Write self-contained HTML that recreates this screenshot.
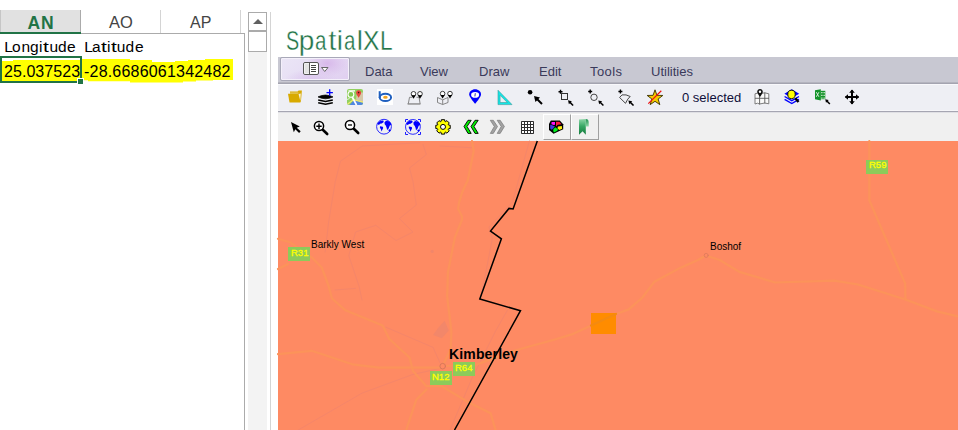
<!DOCTYPE html>
<html><head><meta charset="utf-8">
<style>
*{margin:0;padding:0;box-sizing:border-box}
html,body{width:958px;height:430px;overflow:hidden;background:#fff;position:relative;font-family:"Liberation Sans",sans-serif}
.a{position:absolute;white-space:nowrap;line-height:1}
svg.a{overflow:visible}
</style></head><body>
<!-- Excel column headers -->
<div class="a" style="left:0;top:10px;width:81px;height:22px;background:#e1e1e1;border-right:1px solid #ababab;border-left:1px solid #c6c6c6"></div>
<div class="a" style="left:0;top:32px;width:81px;height:2px;background:#217346"></div>
<div class="a" style="left:160px;top:10px;width:1px;height:23px;background:#d4d4d4"></div>
<div class="a" style="left:240px;top:10px;width:1px;height:23px;background:#d4d4d4"></div>
<div class="a" style="left:81px;top:33px;width:164px;height:1px;background:#ababab"></div>
<div class="a" style="left:244px;top:33px;width:1px;height:397px;background:#ababab"></div>
<div class="a" style="left:27.5px;top:15px;font-size:17.5px;font-weight:bold;letter-spacing:0.8px;color:#217346">AN</div>
<div class="a" style="left:109px;top:14px;font-size:16.5px;color:#444">AO</div>
<div class="a" style="left:190px;top:15px;font-size:16px;color:#444">AP</div>
<!-- rows -->
<span class="a" style="left:4.3px;top:39px;font-size:15.5px;color:#000">L</span><span class="a" style="left:11.9px;top:39px;font-size:15.5px;color:#000">o</span><span class="a" style="left:21.5px;top:39px;font-size:15.5px;color:#000">n</span><span class="a" style="left:30.1px;top:39px;font-size:15.5px;color:#000">g</span><span class="a" style="left:39.0px;top:39px;font-size:15.5px;color:#000">i</span><span class="a" style="left:43.3px;top:39px;font-size:15.5px;color:#000;transform:scaleX(1.35);transform-origin:0 0">t</span><span class="a" style="left:49.5px;top:39px;font-size:15.5px;color:#000">u</span><span class="a" style="left:58.1px;top:39px;font-size:15.5px;color:#000">d</span><span class="a" style="left:66.9px;top:39px;font-size:15.5px;color:#000">e</span>
<span class="a" style="left:84.3px;top:39px;font-size:15.5px;color:#000">L</span><span class="a" style="left:91.9px;top:39px;font-size:15.5px;color:#000">a</span><span class="a" style="left:101.1px;top:39px;font-size:15.5px;color:#000;transform:scaleX(1.35);transform-origin:0 0">t</span><span class="a" style="left:107.0px;top:39px;font-size:15.5px;color:#000">i</span><span class="a" style="left:111.3px;top:39px;font-size:15.5px;color:#000;transform:scaleX(1.35);transform-origin:0 0">t</span><span class="a" style="left:116.8px;top:39px;font-size:15.5px;color:#000">u</span><span class="a" style="left:125.6px;top:39px;font-size:15.5px;color:#000">d</span><span class="a" style="left:134.9px;top:39px;font-size:15.5px;color:#000">e</span>
<div class="a" style="left:2px;top:60px;width:79px;height:21px;background:#ffff00"></div>
<div class="a" style="left:2px;top:58px;width:11px;height:3px;background:#fff"></div>
<svg class="a" style="left:0;top:0" width="958" height="100"><polygon fill="#ffff00" points="82,59 130,59 130,60 152,60 152,62 175,62 175,61 188,61 188,60 205,60 205,59 233,59 233,80 213,80 213,80.5 196,80.5 196,81.5 183,81.5 183,82.6 130,82.6 130,81.2 88,81.2 88,80.2 82,80.2"/></svg>
<div class="a" style="left:0;top:56px;width:82px;height:27px;border:2px solid #217346"></div>
<div class="a" style="left:77px;top:78px;width:7px;height:7px;background:#217346;border:1px solid #fff"></div>
<div class="a" style="left:4px;top:64px;font-size:16px;letter-spacing:0.05px;color:#000">25.037523</div>
<div class="a" style="left:84px;top:64px;font-size:16px;letter-spacing:0.2px;color:#000">-28.6686061342482</div>
<!-- scrollbar -->
<div class="a" style="left:248px;top:12px;width:19px;height:418px;background:#f3f3f3"></div>
<div class="a" style="left:248px;top:12px;width:19px;height:19px;background:#fff;border:1px solid #ababab"></div>
<div class="a" style="left:248px;top:31px;width:19px;height:21px;background:#fff;border:1px solid #ababab"></div>
<svg class="a" style="left:253px;top:18px" width="10" height="6"><path d="M0 6 L5 1 L10 6Z" fill="#606060"/></svg>
<div class="a" style="left:270px;top:12px;width:1px;height:418px;background:#d4d4d4"></div>
<!-- SpatialXL -->
<div class="a" style="left:285.69px;top:27px;font-size:28px;color:#217346;-webkit-text-stroke:0.35px #fff;transform:scaleX(0.706);transform-origin:0 0">S</div>
<div class="a" style="left:298.70px;top:27px;font-size:28px;color:#217346;-webkit-text-stroke:0.35px #fff">p</div>
<div class="a" style="left:314.97px;top:27px;font-size:28px;color:#217346;-webkit-text-stroke:0.35px #fff;transform:scaleX(0.733);transform-origin:0 0">a</div>
<div class="a" style="left:328.60px;top:27px;font-size:28px;color:#217346;-webkit-text-stroke:0.35px #fff">t</div>
<div class="a" style="left:336.80px;top:27px;font-size:28px;color:#217346;-webkit-text-stroke:0.35px #fff">i</div>
<div class="a" style="left:343.67px;top:27px;font-size:28px;color:#217346;-webkit-text-stroke:0.35px #fff;transform:scaleX(0.733);transform-origin:0 0">a</div>
<div class="a" style="left:356.70px;top:27px;font-size:28px;color:#217346;-webkit-text-stroke:0.35px #fff">l</div>
<div class="a" style="left:362.62px;top:27px;font-size:28px;color:#217346;-webkit-text-stroke:0.35px #fff;transform:scaleX(0.882);transform-origin:0 0">X</div>
<div class="a" style="left:379.68px;top:27px;font-size:28px;color:#217346;-webkit-text-stroke:0.35px #fff;transform:scaleX(0.808);transform-origin:0 0">L</div>
<div class="a" style="left:278px;top:57px;width:680px;height:27px;background:#c8c8d2;border-bottom:1px solid #a4a4b0"></div>
<div class="a" style="left:278px;top:82px;width:680px;height:1px;background:#b4b4be"></div>
<div class="a" style="left:280px;top:57px;width:70px;height:24px;background:radial-gradient(ellipse 30% 60% at 68% 25%,#d8b8ea 0%,rgba(216,184,234,0) 100%),radial-gradient(ellipse 40% 50% at 45% 100%,#dcc6ee 0%,rgba(220,198,238,0) 100%),linear-gradient(135deg,#ebe6f6 0%,#e6ddf4 50%,#e0cef0 100%);border:1px solid #a8a8b8;border-radius:2px;box-shadow:inset 0 0 0 1px #f4f0fa"></div>
<div class="a" style="left:365px;top:65px;font-size:13px;color:#3a3a5a">Data</div>
<div class="a" style="left:420px;top:65px;font-size:13px;color:#3a3a5a">View</div>
<div class="a" style="left:479px;top:65px;font-size:13px;color:#3a3a5a">Draw</div>
<div class="a" style="left:539px;top:65px;font-size:13px;color:#3a3a5a">Edit</div>
<div class="a" style="left:590px;top:65px;font-size:13px;letter-spacing:0.4px;color:#3a3a5a">Tools</div>
<div class="a" style="left:651px;top:65px;font-size:13px;color:#3a3a5a">Utilities</div>
<div class="a" style="left:278px;top:84px;width:680px;height:29px;background:#eeeff4;border-top:1px solid #f8f8fb;border-bottom:1px solid #e0e0e4"></div>
<div class="a" style="left:278px;top:110px;width:680px;height:1px;background:#f6f6f9"></div>
<div class="a" style="left:278px;top:111px;width:680px;height:1px;background:#a6a6b2"></div>
<div class="a" style="left:682px;top:91px;font-size:13px;color:#10103a">0 selected</div>
<div class="a" style="left:278px;top:113px;width:680px;height:28px;background:#f0f0f0"></div>
<!-- pressed buttons -->
<div class="a" style="left:543px;top:114px;width:28px;height:26px;border:1px solid;border-color:#fff #a0a0a0 #a0a0a0 #fff"></div>
<div class="a" style="left:571px;top:114px;width:28px;height:26px;border:1px solid;border-color:#fff #a0a0a0 #a0a0a0 #fff"></div>
<!-- icons -->
<svg class="a" style="left:0;top:0" width="958" height="145" viewBox="0 0 958 145">
<!-- menu button icon -->
<rect x="303.5" y="62.5" width="15" height="12" rx="1.5" fill="#fff" stroke="#555" stroke-width="1"/>
<rect x="304.5" y="63.5" width="4.5" height="10" fill="#e4e4e4"/>
<line x1="309.5" y1="62.5" x2="309.5" y2="74.5" stroke="#555" stroke-width="1"/>
<path d="M311 65.5h5M311 67.5h5M311 69.5h5M311 71.5h5" stroke="#444" stroke-width="1"/>
<path d="M321.5 67.5h6.5l-3.25 4z" fill="#fff" stroke="#666" stroke-width="1"/>
<!-- 1 folder -->
<path d="M290 91.6h7.6l1-1h3.3l-1 11.2h-2.5l-0.6-8h-7.8z" fill="#d8aa00"/>
<path d="M290 93h8.5" stroke="#f4e8c0" stroke-width="0.6"/>
<path d="M288 93.8h10.3l2.2 8.8h-11z" fill="#d8aa00"/>
<path d="M298.6 93.9l2.2-0.4-0.5 7.6z" fill="#f6f0dc"/>
<!-- 2 layers -->
<path d="M318 96.9l3.5-1.3 4-0.6 4 0.6 3.5 1.3-3.5 1.3-4 0.6-4-0.6z" fill="#000" stroke="#000" stroke-width="0.7"/>
<path d="M318.2 100l7.3 1.5 7.3-1.5M318.2 102.7l7.3 1.5 7.3-1.5" fill="none" stroke="#000" stroke-width="1.5"/>
<path d="M326.5 92.6h6.4M329.7 89.3v6.4" stroke="#0000ff" stroke-width="1.3"/>
<!-- 3 google maps -->
<clipPath id="gm"><rect x="0" y="0" width="16" height="16" rx="2"/></clipPath>
<g clip-path="url(#gm)" transform="translate(347 89)">
<rect width="16" height="16" fill="#92d060"/>
<path d="M10 3.5h6v9.5l-7-2.5z" fill="#d6c8a8"/>
<path d="M2.5 16l4.5-5 9 2.5v2.5z" fill="#4f86e0"/>
<path d="M0.5 15.2l6-4.6 9.5 2.6" fill="none" stroke="#f2ea70" stroke-width="1.3"/>
<path d="M1.5 1.8h6.5" stroke="#fff" stroke-width="1.2"/>
<circle cx="3.9" cy="5.4" r="2.9" fill="#84c850" stroke="#fff" stroke-width="1.1"/>
<path d="M5.2 8l4.3 8" stroke="#fff" stroke-width="1.7"/>
<path d="M0 10.5l2.5-1" stroke="#fff" stroke-width="0.8"/>
</g>
<path d="M358.6 90.2c-1.4 0-2.5 1.1-2.5 2.5 0 1.6 2.5 5 2.5 5s2.5-3.4 2.5-5c0-1.4-1.1-2.5-2.5-2.5z" fill="#e8453c"/>
<circle cx="358.6" cy="92.6" r="0.8" fill="#401010"/>
<!-- 4 bing -->
<rect x="377" y="89" width="16" height="16" fill="#fff"/>
<path d="M379.7 91.2v6.8" stroke="#1f5fbf" stroke-width="2"/>
<ellipse cx="385.4" cy="97.4" rx="5.7" ry="3.6" fill="none" stroke="#1f5fbf" stroke-width="2"/>
<ellipse cx="385.4" cy="97.3" rx="2.3" ry="1.5" fill="#f3a31f"/>
<!-- 5 pins on land -->
<path d="M407.5 103.8h13M408.3 103.8l1.2-6.5h2.5M416.5 97.3h2.6l1 6.5" fill="none" stroke="#7a7a7a" stroke-width="0.9"/>
<path d="M407.8 104.3h12.5" stroke="#9a9a9a" stroke-width="0.8"/>
<g id="pin"><circle cx="413.5" cy="93.8" r="2.3" fill="#fff" stroke="#111" stroke-width="0.8"/><path d="M411.3 95.2h4.4l-2.2 3.6z" fill="#000"/></g>
<use href="#pin" x="6.5"/>
<!-- 6 pins on box -->
<path d="M437.5 97.5l5.2 2.3 5.3-2.3M437.5 97.5v5l5.2 2l5.3-2v-5M442.7 99.8v4.7" fill="none" stroke="#7a7a7a" stroke-width="0.9"/>
<use href="#pin" x="29.1" y="-0.2"/>
<use href="#pin" x="36.5" y="-0.2"/>
<!-- 7 blue pin -->
<path d="M475.1 89.3c-3.3 0-5.9 2.3-5.9 5.1 0 2.6 5.9 9.3 5.9 9.3s5.9-6.7 5.9-9.3c0-2.8-2.6-5.1-5.9-5.1z" fill="#0000ff"/>
<ellipse cx="475.1" cy="94.9" rx="4" ry="2.8" fill="#fff"/>
<path d="M475.3 93.2l-0.4 3.2" stroke="#2020a0" stroke-width="0.9"/>
<!-- 8 triangle ruler -->
<path d="M498 90.2v14.4h14zM500.1 95.3v7.2h7.2z" fill="#12e6e6" fill-rule="evenodd" stroke="#3a9a9a" stroke-width="0.6"/>
<!-- 9 dot arrow -->
<circle cx="530.1" cy="92.2" r="2.3" fill="#000"/>
<g id="arr"><path d="M534 96l6 1.4-4.6 4.6z" fill="#000"/><path d="M536.5 98.5l5.5 5.5" stroke="#000" stroke-width="1.9"/></g>
<!-- 10 crop arrow -->
<path d="M558.5 91.7h4M560.5 89.7v4" stroke="#000" stroke-width="1.4"/>
<rect x="561.5" y="93.5" width="6" height="6" fill="none" stroke="#333" stroke-width="1"/>
<g transform="translate(568 100.3) scale(0.64)"><path d="M0 0l6 1.4-4.6 4.6z" fill="#000"/><path d="M2.5 2.5l5.5 5.5" stroke="#000" stroke-width="2.4"/></g>
<!-- 11 circle arrow -->
<path d="M588.2 91.5h4M590.2 89.5v4" stroke="#000" stroke-width="1.4"/>
<circle cx="594" cy="97.3" r="3.2" fill="none" stroke="#333" stroke-width="0.9"/>
<g transform="translate(598.3 100.4) scale(0.64)"><path d="M0 0l6 1.4-4.6 4.6z" fill="#000"/><path d="M2.5 2.5l5.5 5.5" stroke="#000" stroke-width="2.4"/></g>
<!-- 12 polygon arrow -->
<path d="M618.4 91.5h4M620.4 89.5v4" stroke="#000" stroke-width="1.4"/>
<path d="M619.6 97.5l2.4-2.6q4-0.8 8.2 1.6l-2.4 2.6-2.3 4.2z" fill="none" stroke="#333" stroke-width="0.9"/>
<g transform="translate(628.4 100.4) scale(0.64)"><path d="M0 0l6 1.4-4.6 4.6z" fill="#000"/><path d="M2.5 2.5l5.5 5.5" stroke="#000" stroke-width="2.4"/></g>
<!-- 13 star crossed -->
<path d="M655.00 89.80 L656.94 95.33 L662.80 95.47 L658.14 99.02 L659.82 104.63 L655.00 101.30 L650.18 104.63 L651.86 99.02 L647.20 95.47 L653.06 95.33Z" fill="#f4cc00" stroke="#3a3000" stroke-width="0.9" stroke-linejoin="miter"/>
<path d="M648.3 103.6l13-12.8" stroke="#ee1111" stroke-width="1.2"/>
<!-- 14 map pin -->
<path d="M755 93.8l2.5-0.6 2 0.6 5.3-1 4 1v10l-4-0.8-5.3 1-2-0.8-2.5 0.8z" fill="#fafafa" stroke="#707070" stroke-width="0.9"/>
<path d="M759.6 93.6v10.8M764.8 92.6v10.8M755 98.3h14" stroke="#5a5a5a" stroke-width="0.9"/>
<path d="M760 89.1c-1.6 0-2.8 1.2-2.8 2.7 0 1.5 2.8 5.2 2.8 5.2s2.8-3.7 2.8-5.2c0-1.5-1.2-2.7-2.8-2.7z" fill="#111"/>
<circle cx="760" cy="91.8" r="1.2" fill="#fff"/>
<!-- 15 yellow layers -->
<path d="M784.4 93.7l7.4-4.4 7.4 4.4-7.4 4.4z" fill="#0000ff"/>
<path d="M784.6 96.5l7.2 4.1 7.2-4.1M784.6 99.3l7.2 4.2 7.2-4.2" fill="none" stroke="#0000ff" stroke-width="1.4"/>
<ellipse cx="791.5" cy="94.4" rx="3.7" ry="4.2" fill="#ffff00" stroke="#000" stroke-width="0.9"/>
<path d="M795.3 98.3l3.2 3.8" stroke="#000" stroke-width="2.4"/>
<!-- 16 excel -->
<path d="M815 90.3l5.8-1.1v11.2l-5.8-1.2z" fill="#14932a"/>
<rect x="820.5" y="90.8" width="4.8" height="8.4" fill="#14932a"/>
<path d="M816.3 92.2l2.6 4.6M818.9 92.2l-2.6 4.6" stroke="#e8f4e8" stroke-width="0.9"/>
<path d="M821.2 92h1.3v1.2h-1.3zM823.5 92h1.3v1.2h-1.3zM821.2 94.8h1.3v1.2h-1.3zM823.5 94.8h1.3v1.2h-1.3zM821.2 97.5h1.3v1.2h-1.3zM823.5 97.5h1.3v1.2h-1.3z" fill="#d8eed8"/>
<g transform="translate(825.2 99.3) scale(0.58)"><path d="M0 0l6 1.4-4.6 4.6z" fill="#000"/><path d="M2.5 2.5l5.5 5.5" stroke="#000" stroke-width="2.6"/></g>
<!-- 17 move -->
<g transform="translate(0 0.3)"><path d="M845.5 96.7h13M852 90v13.5" stroke="#000" stroke-width="2"/>
<path d="M852 89.3l-2.8 3.2h5.6zM852 104.2l-2.8-3.2h5.6zM844.8 96.7l3.2-2.8v5.6zM859.2 96.7l-3.2-2.8v5.6z" fill="#000"/></g>
<!-- toolbar2 -->
<path d="M291 122l8.8 4.4-3.1 1.3 4 3.6-1.6 1.6-3.8-3.7-1.5 3.1z" fill="#000"/>
<circle cx="319" cy="126" r="4.6" fill="#fff" stroke="#000" stroke-width="1.5"/>
<path d="M316.3 126.2h5.4M319 123.5v5.4" stroke="#000" stroke-width="1.4"/>
<path d="M322.8 129.8l4.4 4.2" stroke="#000" stroke-width="2.6" stroke-linecap="round"/>
<circle cx="350" cy="125" r="4.6" fill="#fff" stroke="#000" stroke-width="1.5"/>
<path d="M348 125h4" stroke="#000" stroke-width="1.3"/>
<path d="M353.8 128.8l4.4 4.2" stroke="#000" stroke-width="2.6" stroke-linecap="round"/>
<g id="globe">
<circle cx="384" cy="126.7" r="7.4" fill="none" stroke="#2b2bff" stroke-width="1"/>
<path d="M377.3 124c0.6-1.8 2.5-3.3 4.8-3.6l1.6 0.3-0.2 1.6-1.8 1.2-1.7 0.2-1 1.2z" fill="#0000ff"/>
<path d="M380 126.2l2.8 0.5 0.4 1.4-1.2 2.5-0.5 1-0.6-2.3-1-1.6z" fill="#0000ff"/>
<path d="M384.5 122.2l1.6-1.5 3.5 0.9 1.6 2 0.3 2-1.1-0.8-0.8 1.3-0.9 2.5-1.6 1.5-0.4-2.2-0.8-2.1-1.2-1.5z" fill="#0000ff"/>
<circle cx="389.6" cy="130.4" r="1.1" fill="#0000ff"/>
</g>
<use href="#globe" x="28.9" y="0.2"/>
<path d="M405.5 119.5h2.5M405.5 119.5v2.5M420.5 119.5h-2.5M420.5 119.5v2.5M405.5 134.5h2.5M405.5 134.5v-2.5M420.5 134.5h-2.5M420.5 134.5v-2.5" stroke="#2020ff" stroke-width="1"/>
<path d="M441.18 121.29 L441.34 119.69 L444.66 119.69 L444.82 121.29 L445.68 121.64 L446.92 120.62 L449.28 122.98 L448.26 124.22 L448.61 125.08 L450.21 125.24 L450.21 128.56 L448.61 128.72 L448.26 129.58 L449.28 130.82 L446.92 133.18 L445.68 132.16 L444.82 132.51 L444.66 134.11 L441.34 134.11 L441.18 132.51 L440.32 132.16 L439.08 133.18 L436.72 130.82 L437.74 129.58 L437.39 128.72 L435.79 128.56 L435.79 125.24 L437.39 125.08 L437.74 124.22 L436.72 122.98 L439.08 120.62 L440.32 121.64Z" fill="#ffff00" stroke="#000" stroke-width="1" stroke-linejoin="round"/>
<circle cx="443" cy="126.9" r="2.5" fill="#fff" stroke="#000" stroke-width="1"/>
<path d="M468 120.3h3.2l-4.2 6.2 4.2 6.9h-3.2l-4-6.9zM475 120.3h3.2l-4.2 6.2 4.2 6.9h-3.2l-4-6.9z" fill="#00f000" stroke="#000" stroke-width="0.9" stroke-linejoin="round"/>
<path d="M490.3 120.3h3l4.2 6.2-4.2 6.9h-3l4-6.9zM497.2 120.3h3l4.2 6.2-4.2 6.9h-3l4-6.9z" fill="#a2a2a2" stroke="#787878" stroke-width="0.7" stroke-linejoin="round"/>
<rect x="521" y="121" width="13" height="13" rx="0.8" fill="#2e2e2e"/>
<rect x="522" y="122" width="2" height="2" fill="#fff"/><rect x="522" y="125" width="2" height="2" fill="#fff"/><rect x="522" y="128" width="2" height="2" fill="#fff"/><rect x="522" y="131" width="2" height="2" fill="#fff"/><rect x="525" y="122" width="2" height="2" fill="#fff"/><rect x="525" y="125" width="2" height="2" fill="#fff"/><rect x="525" y="128" width="2" height="2" fill="#fff"/><rect x="525" y="131" width="2" height="2" fill="#fff"/><rect x="528" y="122" width="2" height="2" fill="#fff"/><rect x="528" y="125" width="2" height="2" fill="#fff"/><rect x="528" y="128" width="2" height="2" fill="#fff"/><rect x="528" y="131" width="2" height="2" fill="#fff"/><rect x="531" y="122" width="2" height="2" fill="#fff"/><rect x="531" y="125" width="2" height="2" fill="#fff"/><rect x="531" y="128" width="2" height="2" fill="#fff"/><rect x="531" y="131" width="2" height="2" fill="#fff"/>
<!-- pie -->
<path d="M550.8 120.6h9l3.4 3.6v5l-9.6 4.6-4.6-3.8v-6z" fill="#000"/>
<path d="M551.6 122h3.4v2.8l-1.2 0.2-2.4-0.8z" fill="#ff10ff"/>
<path d="M556 121.8h3.4l2 2.4-3.6 0.6-1.8 1.6z" fill="#ff1a40"/>
<path d="M550.2 124.8l2 0.4 2.8 1.4-2.6 2.6-0.8 0.6-1.4-1.2z" fill="#3b3bdf"/>
<path d="M555.6 127.2l2.4 2.3-0.6 1.2-3.4 1.8-0.8-1.6 0.2-1.8z" fill="#00f020"/>
<path d="M558 126.4l3.8-0.4 0.4 2.8-3 1.2-1.8-1.7z" fill="#ffee10"/>
<!-- bookmark -->
<linearGradient id="bm" x1="0" y1="0" x2="0" y2="1"><stop offset="0" stop-color="#8ed6a8"/><stop offset="0.45" stop-color="#38a866"/><stop offset="1" stop-color="#137a3c"/></linearGradient>
<linearGradient id="bm2" x1="0" y1="0" x2="0" y2="1"><stop offset="0" stop-color="#1f9050"/><stop offset="1" stop-color="#8fd8a8"/></linearGradient>
<path d="M579 119.6l6.8-0.6v15.8l-3.2-3.6-3.6 3.6z" fill="url(#bm)"/>
<path d="M585.8 119c1.8 0 2.9 1.2 2.9 3.4v4h-2.9z" fill="url(#bm2)"/>
</svg>
<!-- map -->
<svg class="a" style="left:278px;top:141px" width="680" height="289" viewBox="278 141 680 289">
<rect x="278" y="141" width="680" height="289" fill="#fe8a63"/>
<g fill="none" stroke-linejoin="round" stroke-linecap="round">
<!-- faint lines -->
<g stroke="#f5866a" stroke-width="1">
<polyline points="419.7,142.7 362.3,146 340.4,161.2 335.3,181.5 328.6,222 325.2,252"/>
<polyline points="423,144.4 426.4,154.5 409.5,168 413,181.5 416.3,205 399.4,218.6 413,232 396,240.5 375.8,225.3 355.6,232 348.8,255.7 359,286 362,300"/>
<polyline points="440,146 472,147.7"/>
<polyline points="529.4,141 512.5,201.7 488.9,227 492.3,238.8 483.8,282.7 480,300"/>
<polyline points="507.4,310.2 495.3,331.6 471.2,380 450,430"/>
<polyline points="385.9,327.2 433.1,347.4 439.9,362.6"/>
<polyline points="298.2,430 362.3,393 413,374.4 442,368"/>
<polyline points="335,290 355.6,288.4"/>
</g>
<!-- roads -->
<g stroke="#fc935a" stroke-width="2.2">
<polyline points="472,141 473.7,151 467.9,180 462.3,192 459.1,202.3 458.1,208.8 461.9,216.3 461.9,220 454.9,237.4 447.9,272.3 447.2,296.7 451.4,331.6 450.7,349 442.7,366"/>
<polyline points="278,238.8 289.8,242.2 311.7,257.4 321.8,267.5 328.6,286 332,298.5 345.5,310.3 382.6,325.5 389.3,339 409.5,357.5 413,371 426.4,386.2 441.7,386.2 467,401.4 490.6,413.2 495.6,430"/>
<polyline points="288,264 278,269"/>
<polyline points="278,354.1 311.7,350.8 352.2,364.3 379.2,367.6 439.9,367.6"/>
<polyline points="406.2,430 416.3,399.7 426.4,389.6"/>
<polyline points="442,366 474.9,365.1 515.8,350.2 556.7,339 571.6,334.4 590.2,326 616.3,314 628.7,309.4 642.5,297.5 654.4,281.7 680.1,267.9 697.9,260 706,255.5"/>
<polyline points="706,255.5 719.6,260 739.4,271.9 775,282.5 834.2,280.6 858,284.5 905.4,299.5 937,311.4 958,316.5"/>
<polyline points="869.3,141 869.3,200.3 905.2,283.6 905.4,299.5"/>
</g>
<rect x="591" y="313" width="25" height="21" fill="#ff8c00"/>
<polyline points="591,325.5 616,314" stroke="#f48a10" stroke-width="2.2"/>
<circle cx="442.7" cy="366.2" r="2.8" stroke="#d8785a" stroke-width="1" fill="#fe8a63"/>
<circle cx="706.2" cy="255.4" r="2" stroke="#e07c5c" stroke-width="0.9" fill="#fe8a63"/>
<path d="M433 335l5-7 6.6-7.3 4.2 9.7-7 7.9-4-1.5z" fill="#f2876a" stroke="none"/>
<circle cx="432.2" cy="251.4" r="1.6" fill="#f2866a" stroke="none"/>
</g>

<rect x="288" y="247" width="22" height="14" fill="#8ccb5a"/>
<rect x="453" y="362" width="22" height="14" fill="#8ccb5a"/>
<rect x="430" y="371" width="22" height="14" fill="#8ccb5a"/>
<rect x="866" y="160" width="22" height="14" fill="#8ccb5a"/>
</svg>
<div class="a" style="left:449px;top:347px;font-size:14px;font-weight:bold;letter-spacing:0.15px;color:#000">Kimberley</div>
<div class="a" style="left:311px;top:240px;font-size:10px;color:#000">Barkly West</div>
<div class="a" style="left:710px;top:242px;font-size:10px;color:#000">Boshof</div>
<div class="a" style="left:291px;top:248px;font-size:9.5px;color:#ffff00;-webkit-text-stroke:0.3px #ffff00">R31</div>
<div class="a" style="left:455px;top:363px;font-size:9.5px;color:#ffff00;-webkit-text-stroke:0.3px #ffff00">R64</div>
<div class="a" style="left:432px;top:372px;font-size:9.5px;color:#ffff00;-webkit-text-stroke:0.3px #ffff00">N12</div>
<div class="a" style="left:869px;top:160px;font-size:9.5px;color:#ffff00;-webkit-text-stroke:0.3px #ffff00">R59</div>
<svg class="a" style="left:278px;top:141px" width="680" height="289" viewBox="278 141 680 289">
<polyline points="537.3,141 513.1,209 509,208.4 490.5,231 501.4,238.8 479.8,299 520.5,310.7 454.5,430" fill="none" stroke="#000" stroke-width="1.5"/>
</svg>
</body></html>
